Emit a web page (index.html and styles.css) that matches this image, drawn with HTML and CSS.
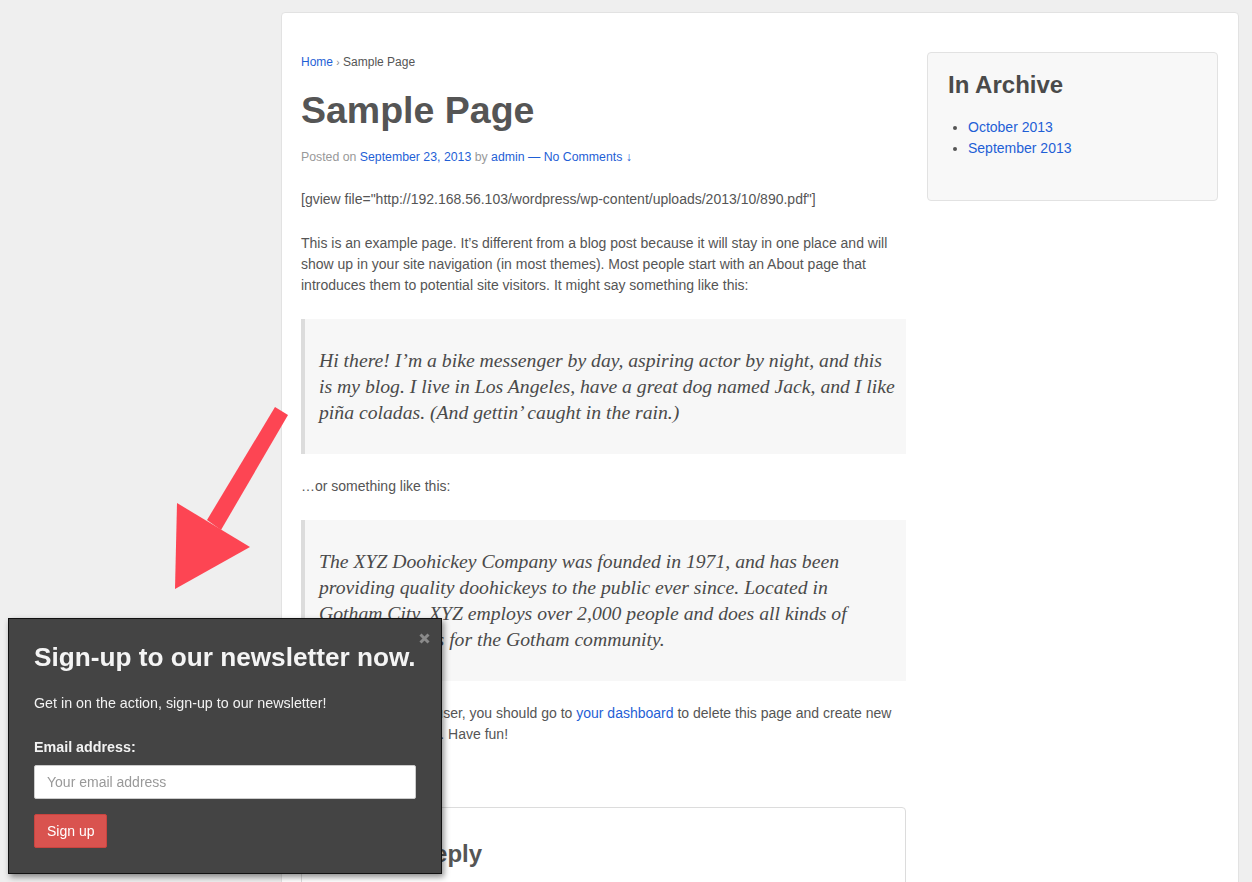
FILE: index.html
```html
<!DOCTYPE html>
<html lang="en">
<head>
  <meta charset="utf-8">
  <meta name="viewport" content="width=device-width, initial-scale=1.0">
  <link rel="stylesheet" href="styles.css">
  <title>Sample Page</title>
</head>
<body>
  <div class="site">
    <div class="card">
      <main class="content">
        <div class="crumbs"><a href="#">Home</a> <span class="sep">›</span> Sample Page</div>
        <h1 class="entry-title">Sample Page</h1>
        <div class="meta">Posted on <a href="#">September 23, 2013</a> by <a href="#">admin</a> <a href="#">— No Comments ↓</a></div>

        <p>[gview file="http://192.168.56.103/wordpress/wp-content/uploads/2013/10/890.pdf"]</p>
        <p>This is an example page. It’s different from a blog post because it will stay in one place and will show up in your site navigation (in most themes). Most people start with an About page that introduces them to potential site visitors. It might say something like this:</p>

        <blockquote>Hi there! I’m a bike messenger by day, aspiring actor by night, and this is my blog. I live in Los Angeles, have a great dog named Jack, and I like piña coladas. (And gettin’ caught in the rain.)</blockquote>

        <p>…or something like this:</p>

        <blockquote>The XYZ Doohickey Company was founded in 1971, and has been providing quality doohickeys to the public ever since. Located in Gotham City, XYZ employs over 2,000 people and does all kinds of awesome things for the Gotham community.</blockquote>

        <p>As a new WordPress user, you should go to <a href="#">your dashboard</a> to delete this page and create new pages for your <a href="#">content</a>. Have fun!</p>

        <div class="respond">
          <h3>Leave a Reply</h3>
        </div>
      </main>

      <aside class="sidebar">
        <div class="widget">
          <h3>In Archive</h3>
          <ul>
            <li><a href="#">October 2013</a></li>
            <li><a href="#">September 2013</a></li>
          </ul>
        </div>
      </aside>
    </div>
  </div>

  <!-- arrow pointing at the popup -->
  <svg class="arrow" width="125" height="195" viewBox="0 0 125 195">
    <polygon points="105,7 118,15 51,130 37,120" fill="#fd4553"/>
    <polygon points="7,103 80,147 5,189" fill="#fd4553"/>
  </svg>

  <div class="popup">
    <span class="close">
      <svg width="11" height="11" viewBox="0 0 11 11">
        <path d="M1.5 1.5 L9.5 9.5 M9.5 1.5 L1.5 9.5" stroke="#8a8a8a" stroke-width="3"/>
      </svg>
    </span>
    <h2>Sign-up to our newsletter now.</h2>
    <p>Get in on the action, sign-up to our newsletter!</p>
    <label for="email">Email address:</label>
    <input id="email" type="text" placeholder="Your email address">
    <button type="button">Sign up</button>
  </div>
</body>
</html>
```

FILE: styles.css
```css
body {
  margin: 0;
  padding: 0;
  background-color: #efefef;
  font-family: "Liberation Sans", Arial, sans-serif;
  font-size: 14px;
  color: #555;
  overflow: hidden;
}

a {
  color: #1f5fd6;
  text-decoration: none;
}

.site {
  padding: 12px 13px 0 281px;
}

.card {
  display: flex;
  gap: 21px;
  background: #fff;
  border: 1px solid #e2e2e2;
  border-radius: 4px;
  padding: 39px 20px 0 19px;
  min-height: 900px;
}

.content {
  width: 605px;
  flex: none;
}

.crumbs {
  font-size: 12px;
  line-height: 18px;
  margin-top: 1px;
}

.crumbs .sep {
  color: #888;
  font-size: 10px;
}

.entry-title {
  font-size: 37.5px;
  line-height: 43px;
  margin: 17px 0 16px;
  color: #555;
}

.meta {
  font-size: 12.3px;
  line-height: 18px;
  color: #999;
  margin-bottom: 23px;
}

.content p {
  margin: 0 0 23px;
  line-height: 21px;
}

blockquote {
  margin: 0 0 22px;
  padding: 28px 11px 29px 14px;
  background: #f7f7f7;
  border-left: 4px solid #dcdcdc;
  font-family: "Liberation Serif", Georgia, serif;
  font-style: italic;
  font-size: 19.7px;
  line-height: 26px;
  color: #4a4a4a;
}

.respond {
  margin-top: 62px;
  border: 1px solid #dcdcdc;
  border-radius: 4px;
  padding: 28px 20px 40px;
  min-height: 100px;
}

.respond h3 {
  margin: 0;
  font-size: 24px;
  line-height: 36px;
  color: #555;
}

.sidebar {
  flex: 1;
}

.widget {
  background: #f8f8f8;
  border: 1px solid #e2e2e2;
  border-radius: 4px;
  padding: 17px 20px 21px;
}

.widget h3 {
  margin: 0 0 18px;
  font-size: 24px;
  line-height: 29px;
  color: #4a4a4a;
}

.widget ul {
  margin: 0 0 20px;
  padding-left: 20px;
  line-height: 21px;
}

.arrow {
  position: absolute;
  left: 170px;
  top: 400px;
}

.popup {
  position: fixed;
  left: 8px;
  bottom: 8px;
  width: 382px;
  padding: 23px 25px 25px 25px;
  background: #444;
  border: 1px solid #111;
  box-shadow: 2px 3px 6px rgba(0, 0, 0, 0.45);
  color: #f2f2f2;
}

.popup .close {
  position: absolute;
  right: 11px;
  top: 14px;
  line-height: 0;
}

.popup h2 {
  margin: 0 0 21px;
  font-size: 26.2px;
  line-height: 30px;
  color: #f4f4f4;
}

.popup p {
  margin: 0 0 24px;
  font-size: 14.3px;
  line-height: 20px;
}

.popup label {
  display: block;
  font-weight: bold;
  font-size: 14.3px;
  line-height: 20px;
  margin-bottom: 8px;
}

.popup input {
  display: block;
  box-sizing: border-box;
  width: 382px;
  height: 34px;
  padding: 0 12px;
  border: 1px solid #ccc;
  border-radius: 2px;
  font-family: "Liberation Sans", Arial, sans-serif;
  font-size: 14px;
  margin-bottom: 15px;
}

.popup input::placeholder {
  color: #999;
}

.popup button {
  display: block;
  height: 34px;
  padding: 0 12px;
  background: #d9534f;
  border: 1px solid #c9443f;
  border-radius: 2px;
  color: #fff;
  font-family: "Liberation Sans", Arial, sans-serif;
  font-size: 14px;
}
```
